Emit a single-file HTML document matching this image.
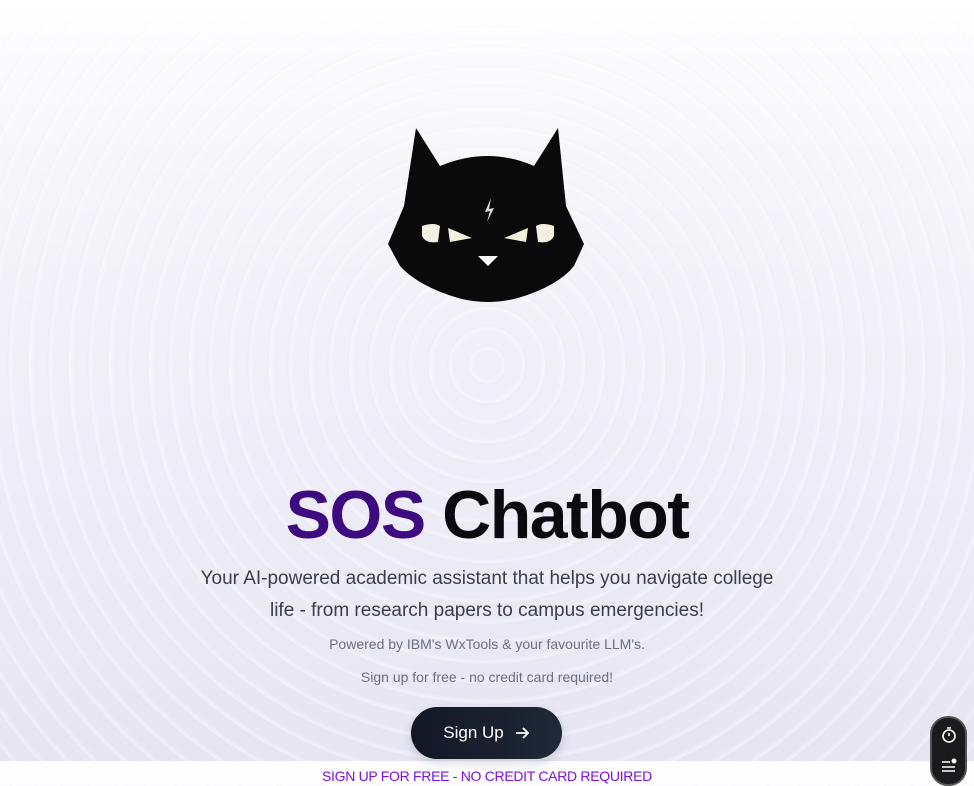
<!DOCTYPE html>
<html><head><meta charset="utf-8"><style>
*{margin:0;padding:0;box-sizing:border-box}
body{width:974px;height:784px;overflow:hidden;font-family:"Liberation Sans",sans-serif;position:relative;
background:
repeating-radial-gradient(circle at 487px 365px, rgba(255,255,255,0) 0px, rgba(255,255,255,0) 13px, rgba(255,255,255,.4) 17px, rgba(200,196,225,.1) 20px),
linear-gradient(#fcfcfe 0%,#f2f1f8 40%,#e6e4f2 100%);}
.top{position:absolute;left:0;top:0;width:974px;height:60px;background:linear-gradient(#fff,rgba(255,255,255,0))}
h1{position:absolute;top:476px;left:0;width:974px;text-align:center;font-size:68px;font-weight:700;letter-spacing:-1.5px;color:#0b0b0f}
h1 span{color:#3d0a80}
.sub{position:absolute;top:563px;left:192px;width:590px;text-align:center;font-size:19px;line-height:32px;color:#3a3f4b}
.p{position:absolute;left:0;width:974px;text-align:center;font-size:14px;color:#6b7080}
.btn{position:absolute;left:411px;top:707px;width:151px;height:52px;border-radius:26px;background:linear-gradient(90deg,#121726,#1f2937);color:#fff;font-size:17px;display:flex;align-items:center;justify-content:center;gap:10px;box-shadow:0 4px 10px rgba(0,0,0,.15)}
.strip{position:absolute;left:0;top:761px;width:974px;height:23px;background:#fdfdfe}
.strip div{position:absolute;left:322px;top:7px;font-size:14px;color:#7a12e0;letter-spacing:-0.3px}
.tool{position:absolute;left:930px;top:716px;width:37px;height:70px;border-radius:18px;background:#1b1b1d;border:2px solid #555}
</style></head><body>
<div class="top"></div>
<svg style="position:absolute;left:388px;top:126px" width="200" height="180" viewBox="0 0 200 180">
<path d="M28 2 L52 40 Q100 20 146 40 L170 2 L178 80 L196 118 L186 140 Q170 160 130 172 Q100 180 70 172 Q30 160 12 140 L0 118 L16 80 Z" fill="#0a0a0a"/>
<path d="M34 100 Q46 96 52 100 L50 116 Q38 118 34 110 Z" fill="#f3f0e0"/>
<path d="M60 102 L84 112 L62 116 Z" fill="#f3f0e0"/>
<path d="M166 100 Q154 96 148 100 L150 116 Q162 118 166 110 Z" fill="#f3f0e0"/>
<path d="M140 102 L116 112 L138 116 Z" fill="#f3f0e0"/>
<path d="M90 130 L110 130 L100 140 Z" fill="#fff"/>
<path d="M103 72 L97 86 L102 85 L99 96 L106 82 L101 83 Z" fill="#ddd"/>
</svg>
<h1><span>SOS</span> Chatbot</h1>
<div class="sub">Your AI-powered academic assistant that helps you navigate college life - from research papers to campus emergencies!</div>
<div class="p" style="top:636px">Powered by IBM's WxTools &amp; your favourite LLM's.</div>
<div class="p" style="top:669px">Sign up for free - no credit card required!</div>
<div class="strip"><div>SIGN UP FOR FREE - NO CREDIT CARD REQUIRED</div></div>
<div class="btn">Sign Up <svg width="16" height="16" viewBox="0 0 16 16"><path d="M2 8H14M9 3L14 8L9 13" stroke="#fff" stroke-width="1.8" fill="none"/></svg></div>
<div class="tool">
<svg style="position:absolute;left:8px;top:8px" width="18" height="18" viewBox="0 0 18 18"><circle cx="9" cy="10" r="6" stroke="#fff" stroke-width="1.6" fill="none"/><path d="M7 2H11M9 10V7" stroke="#fff" stroke-width="1.6"/></svg>
<svg style="position:absolute;left:8px;top:38px" width="18" height="18" viewBox="0 0 18 18"><path d="M2 6H10M2 11H15M2 15H15" stroke="#fff" stroke-width="1.6"/><circle cx="14" cy="5" r="2.5" fill="#fff"/></svg>
</div>
</body></html>
